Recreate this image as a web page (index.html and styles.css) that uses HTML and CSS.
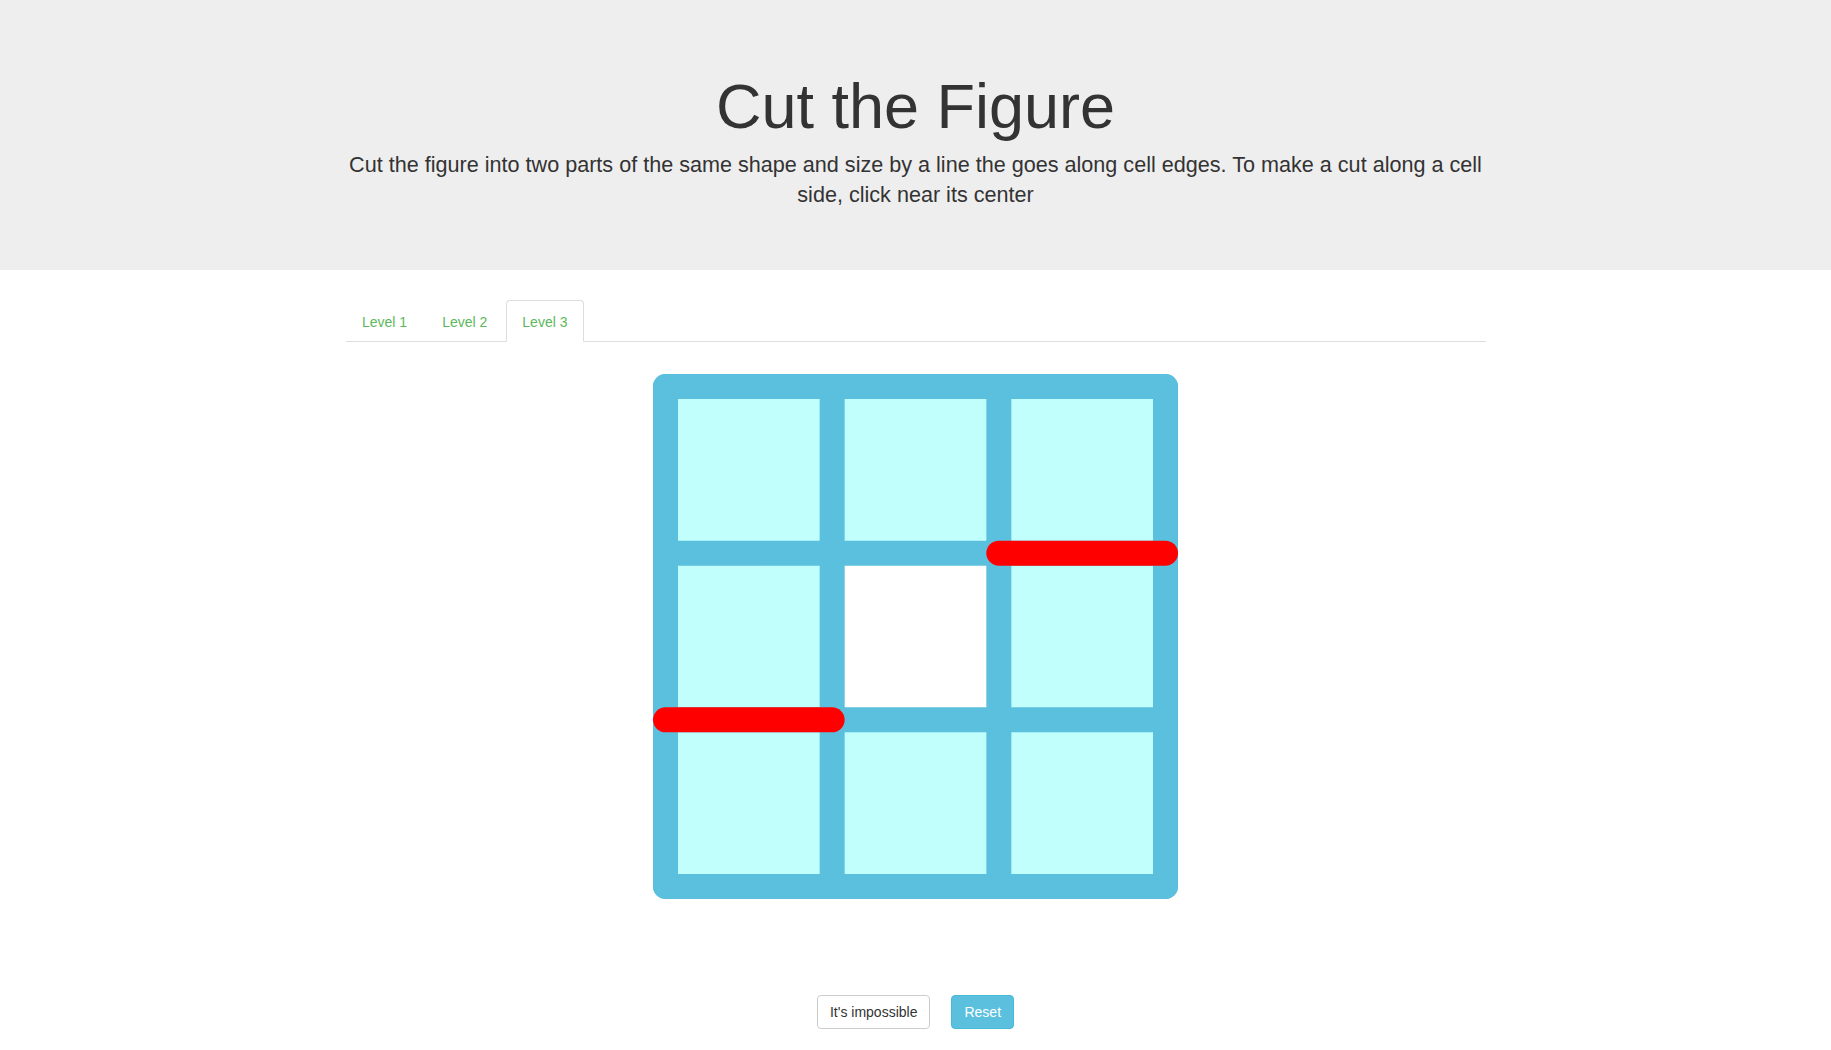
FILE: index.html
```html
<!DOCTYPE html>
<html>
<head>
<meta charset="utf-8">
<title>Cut the Figure</title>
<link rel="stylesheet" href="styles.css">
</head>
<body>
<div class="jumbotron">
  <div class="container">
    <h1>Cut the Figure</h1>
    <p>Cut the figure into two parts of the same shape and size by a line the goes along cell edges. To make a cut along a cell side, click near its center</p>
  </div>
</div>
<div class="container">
  <ul class="nav-tabs">
    <li><a>Level 1</a></li>
    <li><a>Level 2</a></li>
    <li class="active"><a>Level 3</a></li>
  </ul>
  <div class="board">
    <svg width="525" height="525" viewBox="0 0 525 525" xmlns="http://www.w3.org/2000/svg">
      <g fill="#c0fffc" stroke="#8fdde8" stroke-width="1">
        <rect x="12.5" y="12.5" width="166.67" height="166.67"/>
        <rect x="179.17" y="12.5" width="166.67" height="166.67"/>
        <rect x="345.83" y="12.5" width="166.67" height="166.67"/>
        <rect x="12.5" y="179.17" width="166.67" height="166.67"/>
        <rect x="179.17" y="179.17" width="166.67" height="166.67" fill="#ffffff" stroke="#e4e4e4"/>
        <rect x="345.83" y="179.17" width="166.67" height="166.67"/>
        <rect x="12.5" y="345.83" width="166.67" height="166.67"/>
        <rect x="179.17" y="345.83" width="166.67" height="166.67"/>
        <rect x="345.83" y="345.83" width="166.67" height="166.67"/>
      </g>
      <g stroke="#5bc0de" stroke-width="25" stroke-linecap="round">
        <line x1="12.5" y1="12.5" x2="512.5" y2="12.5"/>
        <line x1="12.5" y1="179.17" x2="512.5" y2="179.17"/>
        <line x1="12.5" y1="345.83" x2="512.5" y2="345.83"/>
        <line x1="12.5" y1="512.5" x2="512.5" y2="512.5"/>
        <line x1="12.5" y1="12.5" x2="12.5" y2="512.5"/>
        <line x1="179.17" y1="12.5" x2="179.17" y2="512.5"/>
        <line x1="345.83" y1="12.5" x2="345.83" y2="512.5"/>
        <line x1="512.5" y1="12.5" x2="512.5" y2="512.5"/>
      </g>
      <g stroke="#ff0000" stroke-width="25" stroke-linecap="round">
        <line x1="345.83" y1="179.17" x2="512.5" y2="179.17"/>
        <line x1="12.5" y1="345.83" x2="179.17" y2="345.83"/>
      </g>
    </svg>
  </div>
  <div class="actions">
    <button class="btn btn-default">It's impossible</button>
    <button class="btn btn-info">Reset</button>
  </div>
</div>
</body>
</html>
```
FILE: styles.css
```css
html, body {
  margin: 0;
  padding: 0;
}
body {
  font-family: "Liberation Sans", Arial, Helvetica, sans-serif;
  font-size: 14px;
  line-height: 1.42857143;
  color: #333333;
  background: #ffffff;
}
.container {
  width: 1170px;
  padding: 0 15px;
  margin: 0 auto;
  box-sizing: border-box;
}
.jumbotron {
  background: #eeeeee;
  padding: 52px 0 45px;
  margin-bottom: 30px;
  text-align: center;
}
.jumbotron h1 {
  font-size: 63px;
  font-weight: 500;
  line-height: 1.1;
  margin: 20px 0 9px;
  color: #333333;
}
.jumbotron p {
  font-size: 21.6px;
  line-height: 30px;
  font-weight: 400;
  margin: 0 0 15px;
}
.nav-tabs {
  list-style: none;
  margin: 0;
  padding: 0;
  display: flex;
  border-bottom: 1px solid #dddddd;
}
.nav-tabs li {
  margin-bottom: -1px;
}
.nav-tabs a {
  display: block;
  padding: 10px 15.5px 10px 15.5px;
  margin-right: 2px;
  border: 1px solid transparent;
  border-radius: 4px 4px 0 0;
  color: #5cb85c;
  line-height: 21px;
  height: 19px;
  padding-top: 11px;
  cursor: pointer;
}
.nav-tabs li.active a {
  background: #ffffff;
  border-color: #dddddd #dddddd transparent;
  color: #5cb85c;
}
.board {
  display: flex;
  justify-content: center;
  margin-top: 32px;
}
.board svg {
  display: block;
}
.actions {
  display: flex;
  justify-content: center;
  gap: 21px;
  margin-top: 96px;
}
.btn {
  font-family: "Liberation Sans", Arial, Helvetica, sans-serif;
  font-size: 14px;
  line-height: 20px;
  padding: 6px 12px;
  border: 1px solid transparent;
  border-radius: 4px;
  cursor: pointer;
}
.btn-default {
  background: #ffffff;
  border-color: #cccccc;
  color: #333333;
}
.btn-info {
  background: #5bc0de;
  border-color: #46b8da;
  color: #ffffff;
}
```
